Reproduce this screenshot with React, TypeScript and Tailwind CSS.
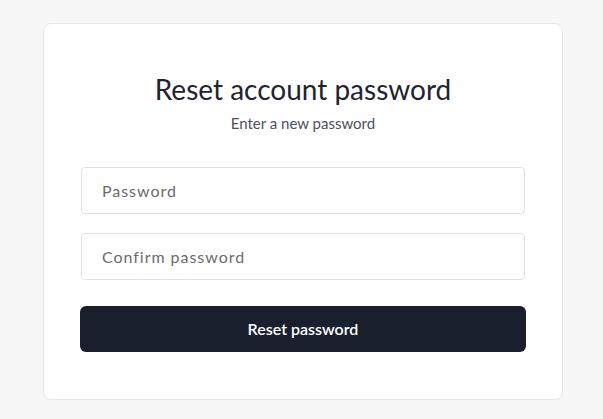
export default function App() {
  return (
    <div
      className="min-h-screen bg-[#f7f7f7] pt-[23px] pb-[18px]"
      style={{ fontFamily: "Lato, 'Noto Sans', sans-serif" }}
    >
      <div className="ml-[43px] w-[520px] rounded-lg border border-[#e8e8e8] bg-white px-[36px] pt-[47px] pb-[47px]">
        <h1 className="text-center text-[28px] leading-[36px] font-normal text-[#1f2430]">
          Reset account password
        </h1>
        <p className="mt-[6px] text-center text-[15px] leading-[20px] text-[#4b5060]">
          Enter a new password
        </p>

        <form className="mt-[34px] flex flex-col" onSubmit={(e) => e.preventDefault()}>
          <input
            type="password"
            placeholder="Password"
            className="mx-px h-[47px] rounded-[4px] border border-[#e2e2e2] bg-white px-[20px] text-[16px] tracking-[0.06em] text-[#333] placeholder:text-[#6b6b6b] outline-none"
          />
          <input
            type="password"
            placeholder="Confirm password"
            className="mx-px mt-[19px] h-[47px] rounded-[4px] border border-[#e2e2e2] bg-white px-[20px] text-[16px] tracking-[0.06em] text-[#333] placeholder:text-[#6b6b6b] outline-none"
          />
          <button
            type="submit"
            className="mt-[26px] h-[46px] rounded-[6px] bg-[#1a1f2e] text-[16px] font-semibold text-white"
          >
            Reset password
          </button>
        </form>
      </div>
    </div>
  );
}
